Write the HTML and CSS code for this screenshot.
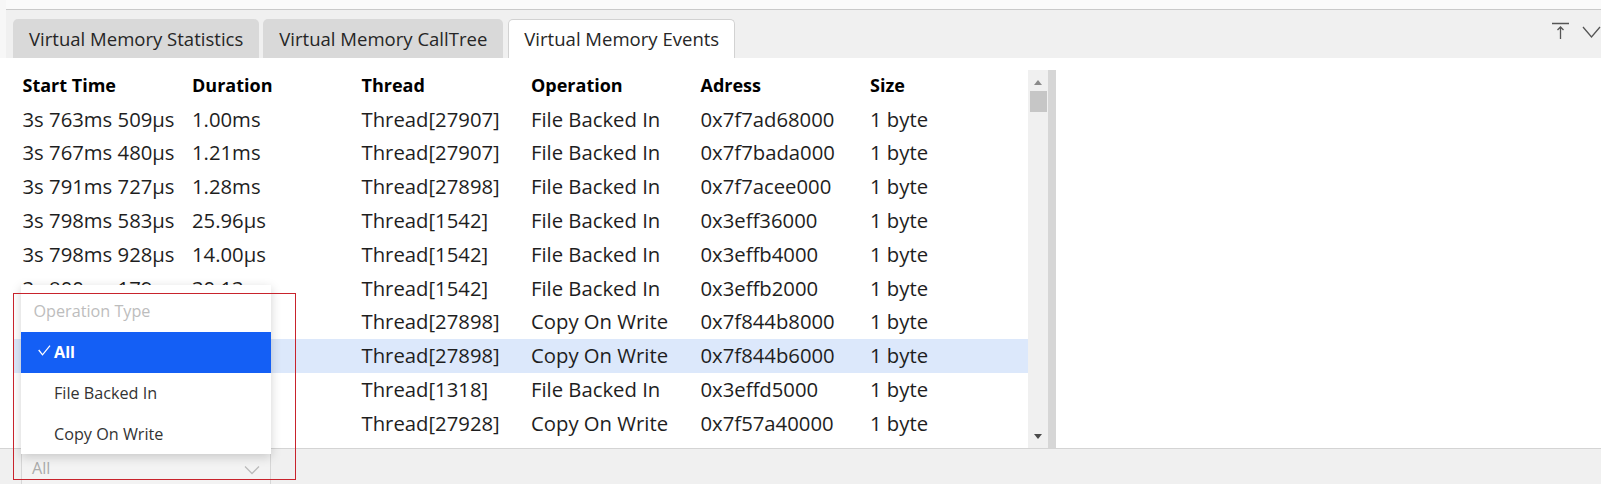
FILE: index.html
```html
<!DOCTYPE html>
<html>
<head>
<meta charset="utf-8">
<link rel="stylesheet" href="styles.css">
</head>
<body>
<div class="window">
  <div class="top">
    <div class="strip"></div>
    <div class="tabbar">
      <div class="tab">Virtual Memory Statistics</div>
      <div class="tab">Virtual Memory CallTree</div>
      <div class="tab active">Virtual Memory Events</div>
      <div class="tools">
        <svg class="ico-pin" width="20" height="18" viewBox="0 0 20 18"><path d="M1 1.5H18M9.5 5V17M6.5 8L9.5 5L12.5 8" fill="none" stroke="#555" stroke-width="1.3"/></svg>
        <svg class="ico-chev" width="20" height="14" viewBox="0 0 20 14"><path d="M1 2L9.5 12L18 2" fill="none" stroke="#555" stroke-width="1.3"/></svg>
      </div>
    </div>
  </div>
  <div class="content">
    <div class="table">
      <div class="row head"><span>Start Time</span><span>Duration</span><span>Thread</span><span>Operation</span><span>Adress</span><span>Size</span></div>
      <div class="row"><span>3s 763ms 509μs</span><span>1.00ms</span><span>Thread[27907]</span><span>File Backed In</span><span>0x7f7ad68000</span><span>1 byte</span></div>
      <div class="row"><span>3s 767ms 480μs</span><span>1.21ms</span><span>Thread[27907]</span><span>File Backed In</span><span>0x7f7bada000</span><span>1 byte</span></div>
      <div class="row"><span>3s 791ms 727μs</span><span>1.28ms</span><span>Thread[27898]</span><span>File Backed In</span><span>0x7f7acee000</span><span>1 byte</span></div>
      <div class="row"><span>3s 798ms 583μs</span><span>25.96μs</span><span>Thread[1542]</span><span>File Backed In</span><span>0x3eff36000</span><span>1 byte</span></div>
      <div class="row"><span>3s 798ms 928μs</span><span>14.00μs</span><span>Thread[1542]</span><span>File Backed In</span><span>0x3effb4000</span><span>1 byte</span></div>
      <div class="row"><span>3s 800ms 179μs</span><span>30.13μs</span><span>Thread[1542]</span><span>File Backed In</span><span>0x3effb2000</span><span>1 byte</span></div>
      <div class="row"><span>3s 801ms 020μs</span><span>8.11μs</span><span>Thread[27898]</span><span>Copy On Write</span><span>0x7f844b8000</span><span>1 byte</span></div>
      <div class="row selected"><span>3s 801ms 344μs</span><span>6.02μs</span><span>Thread[27898]</span><span>Copy On Write</span><span>0x7f844b6000</span><span>1 byte</span></div>
      <div class="row"><span>3s 802ms 117μs</span><span>9.40μs</span><span>Thread[1318]</span><span>File Backed In</span><span>0x3effd5000</span><span>1 byte</span></div>
      <div class="row"><span>3s 803ms 561μs</span><span>7.35μs</span><span>Thread[27928]</span><span>Copy On Write</span><span>0x7f57a40000</span><span>1 byte</span></div>
    </div>
    <div class="scrollbar">
      <div class="track">
        <div class="arrow up"></div>
        <div class="thumb"></div>
        <div class="spacer"></div>
        <div class="arrow down"></div>
      </div>
      <div class="edge"></div>
    </div>
  </div>
  <div class="bottombar">
    <div class="select">
      <span class="select-value">All</span>
      <svg width="16" height="10" viewBox="0 0 16 10"><path d="M1 1.5L8 8.5L15 1.5" fill="none" stroke="#bbb" stroke-width="1.3"/></svg>
    </div>
  </div>

  <div class="popup">
    <div class="popup-label">Operation Type</div>
    <div class="opt selected">
      <svg class="check" width="13" height="11" viewBox="0 0 13 11"><path d="M0.7 5L4.5 9.8L12 0.7" fill="none" stroke="#fff" stroke-width="1.3"/></svg>
      <span>All</span>
    </div>
    <div class="opt"><span>File Backed In</span></div>
    <div class="opt"><span>Copy On Write</span></div>
  </div>
  <div class="annot"></div>
</div>
</body>
</html>
```

FILE: styles.css
```css
* { box-sizing: border-box; }
html, body { margin: 0; padding: 0; }
body {
  width: 1601px;
  height: 484px;
  overflow: hidden;
  background: #ffffff;
  font-family: "Open Sans", "Noto Sans", sans-serif;
  color: #1e1e1e;
}
.window {
  position: relative;
  width: 1601px;
  height: 484px;
  display: flex;
  flex-direction: column;
}
.top {
  background: #f7f7f7;
  padding-left: 6px;
}
.strip {
  height: 10px;
  background: #fafafa;
  border-bottom: 1px solid #c9c9c9;
}
.tabbar {
  height: 48px;
  background: #f0f0f0;
  display: flex;
  align-items: flex-end;
  padding-left: 7px;
  gap: 4px;
}
.tab {
  height: 39px;
  padding: 0 16px;
  background: #d9d9d9;
  border-radius: 5px 5px 0 0;
  font-size: 18.55px;
  line-height: 39px;
  color: #262626;
  white-space: nowrap;
}
.tab.active {
  background: #ffffff;
  border: 1px solid #d2d2d2;
  border-bottom: none;
  padding: 0 15px;
  line-height: 38px;
  margin-left: 1px;
}
.tools {
  margin-left: auto;
  align-self: flex-start;
  margin-top: 12px;
  display: flex;
  align-items: flex-start;
  gap: 11px;
}
.ico-pin { display: block; }
.ico-chev { display: block; margin-top: 3px; margin-right: -1px; }

.content {
  height: 392px;
  display: flex;
  background: #ffffff;
}
.table {
  width: 1028px;
  padding-top: 10.9px;
  overflow: hidden;
}
.row {
  margin-left: 14px;
  padding-left: 8.5px;
  height: 33.8px;
  display: grid;
  grid-template-columns: 169.5px 169.5px 169.5px 169.5px 169.5px 1fr;
  align-items: center;
  font-size: 20.3px;
  line-height: 33.8px;
  white-space: nowrap;
}
.row.head {
  font-weight: 700;
  font-size: 18px;
  color: #000;
}
.row.selected {
  background: #dce8fb;
}
.scrollbar {
  margin-top: 12px;
  height: 378px;
  display: flex;
}
.track {
  width: 20px;
  background: #f0f0f0;
  display: flex;
  flex-direction: column;
  align-items: center;
  padding: 10px 0 9px;
}
.edge {
  width: 8px;
  background: #d6d6d6;
}
.arrow {
  width: 0;
  height: 0;
  border-left: 4px solid transparent;
  border-right: 4px solid transparent;
}
.arrow.up { border-bottom: 5px solid #8a8a8a; }
.arrow.down { border-top: 5px solid #4a4a4a; }
.thumb {
  margin-top: 6px;
  width: 17px;
  height: 21px;
  background: #c6c6c6;
}
.spacer { flex: 1; }

.bottombar {
  flex: 1;
  background: #f0f0f0;
  border-top: 1px solid #d4d4d4;
  padding: 1px 0 0 21px;
}
.select {
  width: 250px;
  height: 40px;
  background: #f3f3f3;
  border: 1px solid #d6d6d6;
  display: flex;
  align-items: flex-start;
  justify-content: space-between;
  padding: 4px 10px 0 10px;
}
.select-value {
  font-size: 16.2px;
  line-height: 26px;
  color: #ababab;
}
.select svg { margin-top: 10px; }

.popup {
  position: absolute;
  left: 21px;
  top: 285px;
  width: 250px;
  height: 169px;
  background: #ffffff;
  box-shadow: 0 3px 10px rgba(0, 0, 0, 0.18);
  font-size: 16.2px;
}
.popup-label {
  height: 46.7px;
  padding: 10px 0 0 12.5px;
  line-height: 33px;
  color: #bdbdbd;
}
.opt {
  height: 41px;
  display: flex;
  align-items: center;
  padding-left: 33px;
  color: #333;
  position: relative;
}
.opt.selected {
  background: #145ff5;
  color: #fff;
  font-weight: 700;
}
.check {
  position: absolute;
  left: 17px;
  top: 13px;
}
.annot {
  position: absolute;
  left: 13px;
  top: 293px;
  width: 283px;
  height: 187px;
  border: 1px solid #c8232c;
  pointer-events: none;
}
```
